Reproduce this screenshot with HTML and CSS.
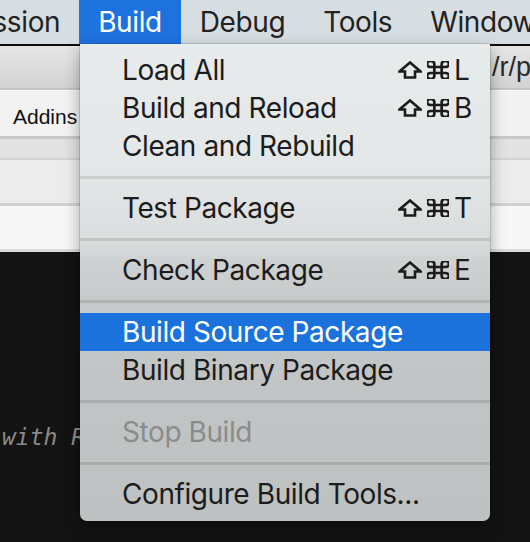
FILE: index.html
```html
<!DOCTYPE html>
<html>
<head>
<meta charset="utf-8">
<link rel="stylesheet" href="styles.css">
</head>
<body>
<div class="screen">
  <nav class="menubar">
    <span class="mb-item mb-first">Session</span>
    <span class="mb-item mb-active">Build</span>
    <span class="mb-item">Debug</span>
    <span class="mb-item">Tools</span>
    <span class="mb-item">Window</span>
  </nav>
  <div class="window">
    <div class="toolbar"><span class="path">/r/pkg</span></div>
    <div class="tabbar"><span class="tab">Addins</span></div>
    <div class="strip strip-a"></div>
    <div class="strip strip-b"></div>
    <div class="strip strip-c"></div>
    <div class="editor"><div class="code">with R</div></div>
  </div>

  <div class="menu">
    <div class="item"><span class="label">Load All</span><span class="keys"><svg class="shift" viewBox="0 0 24 18"><polygon points="12,1.5 22.5,10.5 17,10.5 17,16.5 7,16.5 7,10.5 1.5,10.5"/></svg><svg class="cmd" viewBox="3 3 18 18" preserveAspectRatio="none"><path d="M18 3a3 3 0 0 0-3 3v12a3 3 0 0 0 3 3 3 3 0 0 0 3-3 3 3 0 0 0-3-3H6a3 3 0 0 0-3 3 3 3 0 0 0 3 3 3 3 0 0 0 3-3V6a3 3 0 0 0-3-3 3 3 0 0 0-3 3 3 3 0 0 0 3 3h12a3 3 0 0 0 3-3 3 3 0 0 0-3-3z"/></svg><span class="key">L</span></span></div>
    <div class="item"><span class="label">Build and Reload</span><span class="keys"><svg class="shift" viewBox="0 0 24 18"><polygon points="12,1.5 22.5,10.5 17,10.5 17,16.5 7,16.5 7,10.5 1.5,10.5"/></svg><svg class="cmd" viewBox="3 3 18 18" preserveAspectRatio="none"><path d="M18 3a3 3 0 0 0-3 3v12a3 3 0 0 0 3 3 3 3 0 0 0 3-3 3 3 0 0 0-3-3H6a3 3 0 0 0-3 3 3 3 0 0 0 3 3 3 3 0 0 0 3-3V6a3 3 0 0 0-3-3 3 3 0 0 0-3 3 3 3 0 0 0 3 3h12a3 3 0 0 0 3-3 3 3 0 0 0-3-3z"/></svg><span class="key">B</span></span></div>
    <div class="item"><span class="label">Clean and Rebuild</span></div>
    <div class="sep"></div>
    <div class="item"><span class="label">Test Package</span><span class="keys"><svg class="shift" viewBox="0 0 24 18"><polygon points="12,1.5 22.5,10.5 17,10.5 17,16.5 7,16.5 7,10.5 1.5,10.5"/></svg><svg class="cmd" viewBox="3 3 18 18" preserveAspectRatio="none"><path d="M18 3a3 3 0 0 0-3 3v12a3 3 0 0 0 3 3 3 3 0 0 0 3-3 3 3 0 0 0-3-3H6a3 3 0 0 0-3 3 3 3 0 0 0 3 3 3 3 0 0 0 3-3V6a3 3 0 0 0-3-3 3 3 0 0 0-3 3 3 3 0 0 0 3 3h12a3 3 0 0 0 3-3 3 3 0 0 0-3-3z"/></svg><span class="key">T</span></span></div>
    <div class="sep"></div>
    <div class="item"><span class="label">Check Package</span><span class="keys"><svg class="shift" viewBox="0 0 24 18"><polygon points="12,1.5 22.5,10.5 17,10.5 17,16.5 7,16.5 7,10.5 1.5,10.5"/></svg><svg class="cmd" viewBox="3 3 18 18" preserveAspectRatio="none"><path d="M18 3a3 3 0 0 0-3 3v12a3 3 0 0 0 3 3 3 3 0 0 0 3-3 3 3 0 0 0-3-3H6a3 3 0 0 0-3 3 3 3 0 0 0 3 3 3 3 0 0 0 3-3V6a3 3 0 0 0-3-3 3 3 0 0 0-3 3 3 3 0 0 0 3 3h12a3 3 0 0 0 3-3 3 3 0 0 0-3-3z"/></svg><span class="key">E</span></span></div>
    <div class="sep"></div>
    <div class="item item-active"><span class="label">Build Source Package</span></div>
    <div class="item"><span class="label">Build Binary Package</span></div>
    <div class="sep"></div>
    <div class="item item-disabled"><span class="label">Stop Build</span></div>
    <div class="sep"></div>
    <div class="item"><span class="label">Configure Build Tools...</span></div>
  </div>
</div>
</body>
</html>
```

FILE: styles.css
```css
* { box-sizing: border-box; }
html, body { margin: 0; padding: 0; }
body {
  width: 530px;
  height: 542px;
  overflow: hidden;
  background: #131313;
  font-family: "Inter", "Liberation Sans", sans-serif;
}
.screen {
  position: relative;
  width: 530px;
  height: 542px;
  overflow: hidden;
  display: flex;
  flex-direction: column;
}
.menubar {
  height: 44px;
  flex: none;
  display: flex;
  background: #d6dee2;
  white-space: nowrap;
  overflow: hidden;
}
.mb-item {
  font-size: 28px;
  line-height: 44px;
  padding: 0 19px;
  color: #222;
  letter-spacing: -0.4px;
}
.mb-first { margin-left: -60px; }
.mb-active { background: #1d72de; color: #fff; }

.window { flex: 1; display: flex; flex-direction: column; }
.toolbar {
  height: 46px;
  flex: none;
  border-top: 2px solid #0c0c0c;
  border-bottom: 2px solid #c4c4c4;
  background: linear-gradient(#e6e6e6, #d3d3d3);
  display: flex;
  align-items: center;
  overflow: hidden;
  white-space: nowrap;
}
.path {
  margin-left: 492px;
  font-family: "Liberation Sans", sans-serif;
  font-size: 27px;
  color: #2a2a2a;
}
.tabbar {
  height: 49px;
  flex: none;
  background: #f2f2f2;
  border-top: 1px solid #fbfbfb;
  border-bottom: 3px solid #c9c9c9;
  padding-left: 13px;
  display: flex;
  align-items: center;
}
.tab {
  font-family: "Liberation Sans", sans-serif;
  font-size: 21px;
  color: #111;
  padding-top: 7px;
}
.strip { flex: none; }
.strip-a { height: 21px; background: #e2e2e2; border-bottom: 2px solid #d3d3d3; }
.strip-b { height: 46px; background: #ececec; border-bottom: 3px solid #d0d0d0; }
.strip-c { height: 46px; background: #f7f7f7; border-bottom: 3px solid #dadada; }
.editor {
  flex: 1;
  background: #131313;
  padding-top: 170px;
}
.code {
  font-family: "DejaVu Sans Mono", monospace;
  font-style: italic;
  font-size: 23px;
  line-height: 30px;
  color: #8a8a8a;
  padding-left: 2px;
  white-space: pre;
}

.menu {
  position: absolute;
  left: 80px;
  top: 44px;
  width: 410px;
  padding: 7px 0 8px;
  border-radius: 0 0 7px 7px;
  background: linear-gradient(to bottom,
    #e8ebec 0px, #e4e7e8 130px, #dadddd 196px, #cfd2d2 216px,
    #c7caca 256px, #c2c5c5 330px, #bec1c1 100%);
  box-shadow: 0 0 0 1px rgba(0,0,0,0.12), 0 6px 16px rgba(0,0,0,0.35);
  font-size: 28px;
  color: #1c1c1c;
  letter-spacing: -0.42px;
}
.item {
  height: 38px;
  line-height: 38px;
  padding: 0 23px 0 42px;
  display: flex;
  justify-content: space-between;
  align-items: center;
  white-space: nowrap;
}
.item-active { background: #1b72dd; color: #fff; }
.item-disabled { color: #8a8c8c; }
.sep {
  height: 24px;
  padding: 11px 0 10px;
}
.sep::before {
  content: "";
  display: block;
  height: 3px;
  background: rgba(0,0,0,0.11);
}
.keys {
  display: flex;
  align-items: center;
  gap: 5px;
  letter-spacing: 0;
}
.shift { width: 24px; height: 18px; }
.shift polygon { fill: none; stroke: #1c1c1c; stroke-width: 2.6; stroke-linejoin: miter; }
.cmd { width: 22px; height: 18px; }
.cmd path { fill: none; stroke: #1c1c1c; stroke-width: 2.7; vector-effect: non-scaling-stroke; }
.key { width: 13px; }
```
